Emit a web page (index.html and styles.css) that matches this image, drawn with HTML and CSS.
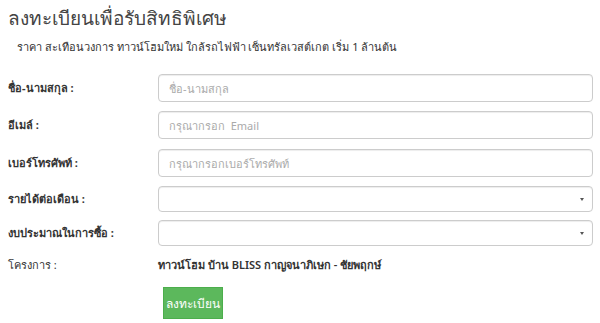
FILE: index.html
```html
<!DOCTYPE html>
<html lang="th">
<head>
    <meta charset="UTF-8">
    <meta name="viewport" content="width=device-width, initial-scale=1.0">
    <title>ลงทะเบียนเพื่อรับสิทธิพิเศษ</title>
    <link rel="stylesheet" href="styles.css">
</head>
<body>
    <div class="register">
        <h3 class="register-title">ลงทะเบียนเพื่อรับสิทธิพิเศษ</h3>
        <p class="register-sub">ราคา สะเทือนวงการ ทาวน์โฮมใหม่ ใกล้รถไฟฟ้า เซ็นทรัลเวสต์เกต เริ่ม 1 ล้านต้น</p>

        <form class="register-form">
            <div class="form-row">
                <label class="form-label">ชื่อ-นามสกุล :</label>
                <input class="form-control" type="text" placeholder="ชื่อ-นามสกุล">
            </div>
            <div class="form-row gap-10">
                <label class="form-label">อีเมล์ :</label>
                <input class="form-control" type="email" placeholder="กรุณากรอก  Email">
            </div>
            <div class="form-row">
                <label class="form-label">เบอร์โทรศัพท์ :</label>
                <input class="form-control" type="tel" placeholder="กรุณากรอกเบอร์โทรศัพท์">
            </div>
            <div class="form-row row-select">
                <label class="form-label">รายได้ต่อเดือน :</label>
                <div class="select-box">
                    <select class="form-control"><option></option></select>
                    <span class="caret"></span>
                </div>
            </div>
            <div class="form-row row-select">
                <label class="form-label">งบประมาณในการซื้อ :</label>
                <div class="select-box">
                    <select class="form-control"><option></option></select>
                    <span class="caret"></span>
                </div>
            </div>
            <div class="form-row row-text">
                <label class="form-label light">โครงการ :</label>
                <div class="form-static">ทาวน์โฮม บ้าน BLISS กาญจนาภิเษก - ชัยพฤกษ์</div>
            </div>
            <div class="form-row row-btn">
                <span class="form-label"></span>
                <button type="button" class="btn-register">ลงทะเบียน</button>
            </div>
        </form>
    </div>
</body>
</html>
```

FILE: styles.css
```css
body, html {
    margin: 0;
    padding: 0;
    background-color: #fff;
    font-family: "Noto Sans", "DejaVu Sans", sans-serif;
    color: #333;
}

.register {
    padding: 0 7px 0 8px;
}

.register-title {
    margin: 0;
    padding-top: 6px;
    font-size: 19px;
    font-weight: 400;
    line-height: 24px;
    color: #444;
}

.register-sub {
    margin: 9px 0 0 9px;
    height: 16px;
    font-size: 11px;
    line-height: 16px;
    color: #333;
    white-space: nowrap;
}

.register-form {
    margin-top: 19px;
}

.form-row {
    display: flex;
    align-items: center;
    height: 28px;
    margin-bottom: 9px;
}

.form-row.gap-10 {
    margin-bottom: 10px;
}

.row-select {
    height: 26px;
    margin-bottom: 8px;
}

.form-label {
    flex: 0 0 150px;
    font-size: 11px;
    line-height: 16px;
    font-weight: 700;
    color: #333;
    white-space: nowrap;
}

.form-label.light {
    font-weight: 400;
}

.form-control {
    flex: 1;
    box-sizing: border-box;
    height: 28px;
    padding: 0 10px;
    font-family: inherit;
    font-size: 11px;
    color: #555;
    border: 1px solid #ccc;
    border-radius: 4px;
    background-color: #fff;
    box-shadow: inset 0 1px 1px rgba(0,0,0,0.075);
    outline: none;
}

.form-control::placeholder {
    color: #aaa;
}

.select-box {
    flex: 1;
    display: flex;
    position: relative;
}

.select-box .form-control {
    height: 26px;
    appearance: none;
    -webkit-appearance: none;
}

.caret {
    position: absolute;
    right: 9px;
    top: 12px;
    width: 0;
    height: 0;
    border-left: 2px solid transparent;
    border-right: 2px solid transparent;
    border-top: 3px solid #555;
}

.row-text {
    height: 20px;
    margin-top: 9px;
    margin-bottom: 12px;
}

.form-static {
    font-size: 11px;
    font-weight: 600;
    color: #333;
    white-space: nowrap;
}

.row-btn {
    height: 32px;
    padding-left: 5px;
}

.btn-register {
    width: 60px;
    height: 32px;
    padding: 0;
    font-family: inherit;
    font-size: 12px;
    color: #fff;
    white-space: nowrap;
    background-color: #5cb85c;
    border: 1px solid #4cae4c;
    cursor: pointer;
}
```
